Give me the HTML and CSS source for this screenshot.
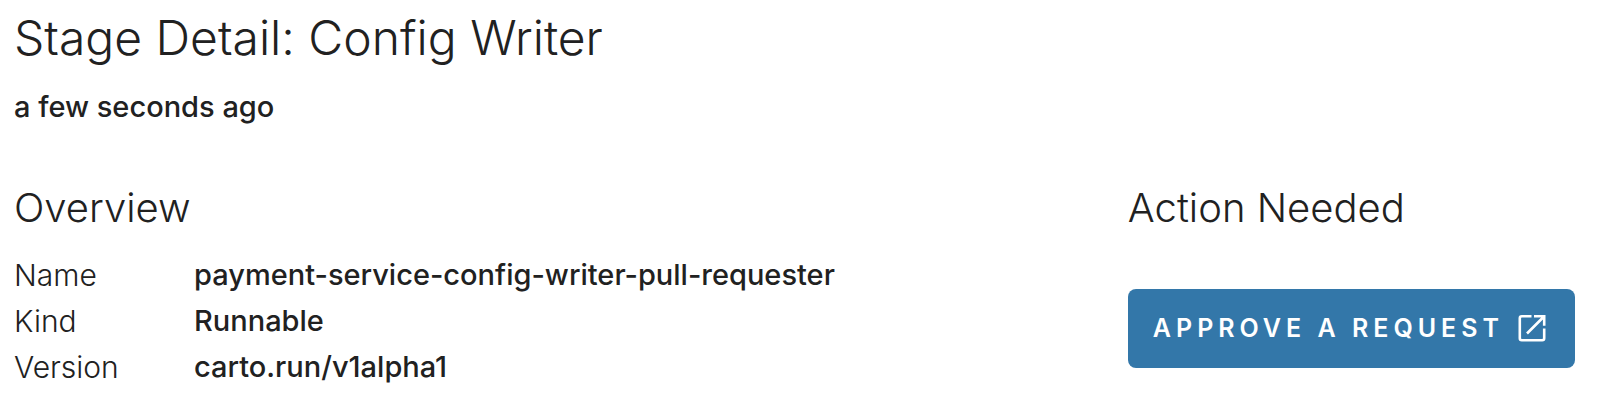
FILE: index.html
```html
<!DOCTYPE html>
<html lang="en">
<head>
<meta charset="utf-8">
<meta name="viewport" content="width=device-width, initial-scale=1">
<title>Stage Detail: Config Writer</title>
<link rel="stylesheet" href="styles.css">
</head>
<body>
<main class="stage">
  <header class="stage-header">
    <h1 class="stage-title">Stage Detail: Config Writer</h1>
    <p class="stage-time">a few seconds ago</p>
  </header>
  <div class="columns">
    <section>
      <h2 class="section-title">Overview</h2>
      <dl class="details">
        <dt>Name</dt><dd>payment-service-config-writer-pull-requester</dd>
        <dt>Kind</dt><dd>Runnable</dd>
        <dt>Version</dt><dd>carto.run/v1alpha1</dd>
      </dl>
    </section>
    <section>
      <h2 class="section-title">Action Needed</h2>
      <button class="approve" type="button">
        <span>Approve a request</span>
        <svg class="approve-icon" viewBox="0 0 28 28" fill="none" stroke="currentColor" stroke-width="2.6" aria-hidden="true">
          <path d="M13.500 2.300H3.800A2 2 0 0 0 1.800 4.300V24.200A2 2 0 0 0 3.800 26.200H24.200A2 2 0 0 0 26.200 24.200V14.500"/>
          <path d="M16 2.300H26.200V11.800M25.500 3L9 19.500"/>
        </svg>
      </button>
    </section>
  </div>
</main>
</body>
</html>
```
FILE: styles.css
```css
* { box-sizing: border-box; }

body {
  margin: 0;
  background: #fff;
  color: #212121;
  font-family: Inter, "Liberation Sans", sans-serif;
}

h1, h2, p, dl, dd { margin: 0; }

.stage { padding: 8px 39px 0 14px; }

.stage-title {
  font-size: 48px;
  line-height: 60px;
  font-weight: 300;
}

.stage-time {
  margin-top: 19px;
  font-size: 29px;
  line-height: 40px;
  font-weight: 500;
}

.columns {
  display: grid;
  grid-template-columns: minmax(0, 1fr) auto;
  margin-top: 57px;
}

.section-title {
  font-size: 40px;
  line-height: 48px;
  font-weight: 300;
}

.details {
  display: grid;
  grid-template-columns: 180px minmax(0, 1fr);
  margin-top: 20px;
  font-size: 29px;
  line-height: 46px;
}

.details dt {
  font-size: 30px;
  font-weight: 300;
}

.details dd { font-weight: 500; }

.approve {
  display: flex;
  align-items: center;
  gap: 14px;
  margin-top: 57px;
  padding: 19px 29px 20px 25px;
  border: 0;
  border-radius: 8px;
  background: #3377a9;
  color: #fff;
  font: 600 25px/40px Inter, "Liberation Sans", sans-serif;
  letter-spacing: 5px;
  text-transform: uppercase;
  cursor: pointer;
}

.approve-icon { width: 28px; height: 28px; }
```
